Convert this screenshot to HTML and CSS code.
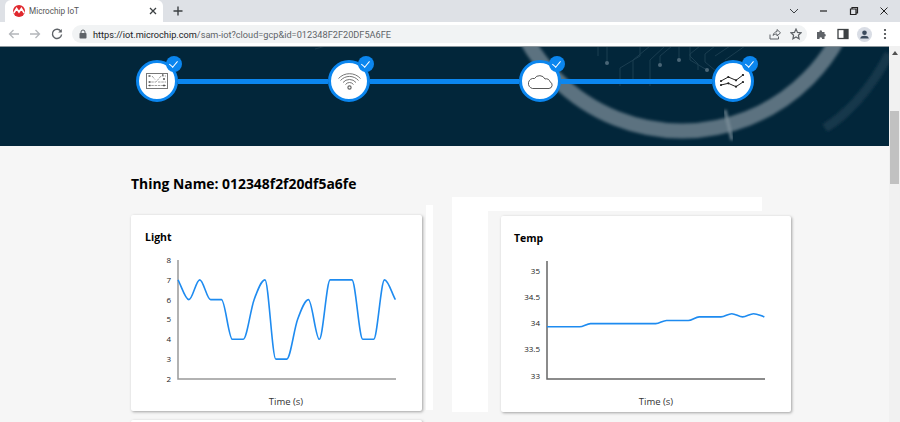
FILE: index.html
```html
<!DOCTYPE html>
<html lang="en">
<head>
    <meta charset="UTF-8">
    <title>Microchip IoT</title>
    <link rel="stylesheet" href="styles.css">
</head>
<body>
    <div class="tabstrip">
        <div class="tab">
            <svg class="favicon" width="12" height="12" viewBox="0 0 12 12">
                <circle cx="6" cy="6" r="6" fill="#e0282e"/>
                <path d="M.8 8 L3.6 3.500 L6 7 L8.400 3.500 L11.200 8" fill="none" stroke="#fff" stroke-width="1.600"/>
            </svg>
            <span class="tab-title">Microchip IoT</span>
            <svg class="tab-close" width="8" height="8" viewBox="0 0 8 8">
                <path d="M1 1 L7 7 M7 1 L1 7" stroke="#3c4043" stroke-width="1.3"/>
            </svg>
        </div>
        <svg class="new-tab" width="10" height="10" viewBox="0 0 10 10">
            <path d="M5 .5 V9.5 M.5 5 H9.5" stroke="#3c4043" stroke-width="1.4"/>
        </svg>
        <div class="window-btns">
            <svg width="10" height="10" viewBox="0 0 10 10"><path d="M1 3 L5 7 L9 3" fill="none" stroke="#3c4043"/></svg>
            <svg width="10" height="10" viewBox="0 0 10 10"><path d="M1 5 H8" stroke="#222" stroke-width="1.2"/></svg>
            <svg width="10" height="10" viewBox="0 0 10 10"><path d="M1.5 3 H7 V8.5 H1.5 Z M3 3 V1.5 H8.5 V7 H7" fill="none" stroke="#222" stroke-width="1.2"/></svg>
            <svg width="10" height="10" viewBox="0 0 10 10"><path d="M1.5 1.5 L8.5 8.5 M8.5 1.5 L1.5 8.5" stroke="#222"/></svg>
        </div>
    </div>

    <div class="toolbar">
        <svg class="nav-icon" width="12" height="12" viewBox="0 0 12 12"><path d="M11 6 H1.5 M5.5 2 L1.5 6 L5.5 10" fill="none" stroke="#b4b7bb" stroke-width="1.3"/></svg>
        <svg class="nav-icon" width="12" height="12" viewBox="0 0 12 12"><path d="M1 6 H10.5 M6.5 2 L10.5 6 L6.5 10" fill="none" stroke="#b4b7bb" stroke-width="1.3"/></svg>
        <svg class="nav-icon" width="12" height="12" viewBox="0 0 12 12"><path d="M10 3.5 A4.6 4.6 0 1 0 10.6 6.5" fill="none" stroke="#5f6368" stroke-width="1.4"/><path d="M10.8 1 V4.6 H7.2 Z" fill="#5f6368"/></svg>
        <div class="address">
            <svg class="lock" width="8" height="10" viewBox="0 0 8 10"><path d="M2 4.5 V3 A2 2 0 0 1 6 3 V4.5" fill="none" stroke="#5f6368"/><rect x=".5" y="4" width="7" height="5.5" rx=".8" fill="#5f6368"/></svg>
            <span class="url"><b>https://iot.microchip.com</b>/sam-iot?cloud=gcp&amp;id=012348F2F20DF5A6FE</span>
            <svg class="addr-icon" width="12" height="12" viewBox="0 0 12 12"><path d="M1 6.5 V11 H9.5 V8.5 M4 7.5 C4.5 5 6.5 3.6 8 3.6 V1.5 L11.5 4.8 L8 8 V6 C6.5 6 5 6.3 4 7.5 Z" fill="none" stroke="#5f6368"/></svg>
            <svg class="addr-icon" width="12" height="12" viewBox="0 0 12 12"><path d="M6 1 L7.5 4.4 L11 4.8 L8.4 7.2 L9.1 10.8 L6 9 L2.9 10.8 L3.6 7.2 L1 4.8 L4.5 4.4 Z" fill="none" stroke="#5f6368" stroke-width="1.2"/></svg>
        </div>
        <div class="tool-icons">
            <svg width="12" height="12" viewBox="0 0 12 12"><path d="M1 4 H3.5 A1.3 1.3 0 1 1 6 4 H8.5 V6 A1.3 1.3 0 1 1 8.5 8.6 V11 H6 A1.3 1.3 0 1 0 3.5 11 H1 Z" fill="#5f6368"/></svg>
            <svg width="12" height="12" viewBox="0 0 12 12"><rect x="1" y="1.5" width="10" height="9" fill="none" stroke="#3c4043" stroke-width="1.3"/><rect x="6.5" y="1.5" width="4.5" height="9" fill="#3c4043"/></svg>
            <span class="avatar">
                <svg width="15" height="15" viewBox="0 0 15 15"><circle cx="7.5" cy="5.7" r="2.3" fill="#3b4a5c"/><path d="M3.2 11.5 C3.4 9.3 5.4 8.7 7.5 8.7 C9.6 8.7 11.6 9.3 11.8 11.5 Z" fill="#3b4a5c"/></svg>
            </span>
            <svg width="12" height="12" viewBox="0 0 12 12"><circle cx="6" cy="2" r="1.1" fill="#3c4043"/><circle cx="6" cy="6" r="1.1" fill="#3c4043"/><circle cx="6" cy="10" r="1.1" fill="#3c4043"/></svg>
        </div>
    </div>

    <div class="viewport">
        <div class="page">
            <div class="hero">
                <!-- background art of the banner -->
                <svg class="hero-art" width="889" height="100" viewBox="0 0 889 100">
                    <defs>
                        <filter id="soft"><feGaussianBlur stdDeviation="1.5"/></filter>
                    </defs>
                    <circle cx="682" cy="-93" r="178" fill="none" stroke="#5c7280" stroke-width="15" filter="url(#soft)"/>
                    <path d="M725 64 L732 94" stroke="#7d909b" stroke-width="2.5" filter="url(#soft)"/>
                    <path d="M889 8 C870 45 845 70 825 82" fill="none" stroke="#16394c" stroke-width="9" filter="url(#soft)"/>
                    <g fill="none" stroke="#1b3e51">
                        <path d="M607 0 V17 M598 0 V10 M640 0 V10 L620 22 V40"/>
                        <path d="M650 0 L633 14 V34 M665 0 L650 14 V40 M672 0 L660 10 V19"/>
                        <path d="M679 0 V14 M690 0 V10 L698 18 V24 M700 0 L690 8 V14 L707 24"/>
                        <path d="M715 0 L705 8 V16 L722 30 M730 0 L715 10 M745 0 L725 14"/>
                    </g>
                    <g fill="#4a6676">
                        <circle cx="607" cy="17" r="2"/>
                        <circle cx="660" cy="19" r="2"/>
                        <circle cx="679" cy="14" r="2"/>
                        <circle cx="707" cy="24" r="2"/>
                    </g>
                    <path d="M326 0 L315 3" stroke="#17394b"/>
                </svg>
                <div class="steps">
                    <div class="step">
                        <svg width="22" height="16" viewBox="0 0 22 16">
                            <rect x=".5" y=".5" width="21" height="15" fill="none" stroke="#777"/>
                            <path d="M2 9 H10 L15 3 H20 M2 12.500 H20 M6 3 L9 6.500 M12 9 H20" fill="none" stroke="#888" stroke-width=".8" stroke-dasharray="2.500 .8"/>
                            <path d="M2.500 3 h2 M16 2 h1.500 M17 6 h2 M3 9 h1.500 M3 12.500 h1.500 M17 12.500 h2" stroke="#555" stroke-width="1.500"/>
                        </svg>
                        <span class="check"></span>
                    </div>
                    <div class="connector"></div>
                    <div class="step">
                        <svg width="23" height="17" viewBox="0 0 23 17">
                            <g fill="none" stroke="#666" stroke-width=".9">
                                <path d="M.5 5.500 A15 15 0 0 1 22.500 5.500"/>
                                <path d="M2.500 7.500 A12 12 0 0 1 20.500 7.500"/>
                                <path d="M5 9.500 A8.500 8.500 0 0 1 18 9.500"/>
                                <path d="M7.500 11.500 A5 5 0 0 1 15.500 11.500"/>
                                <circle cx="11.500" cy="14.500" r="1.600" stroke-width="1.200"/>
                            </g>
                        </svg>
                        <span class="check"></span>
                    </div>
                    <div class="connector"></div>
                    <div class="step">
                        <svg width="25" height="15" viewBox="0 0 25 15">
                            <path d="M4.500 14.500 H21 A3.500 3.500 0 0 0 22 7.800 A3.800 3.800 0 0 0 17 5 A6 6 0 0 0 6.500 4.500 A5 5 0 0 0 4.500 14.500 Z" fill="none" stroke="#444" stroke-width=".9"/>
                        </svg>
                        <span class="check"></span>
                    </div>
                    <div class="connector"></div>
                    <div class="step">
                        <svg class="graph-icon" width="24" height="14" viewBox="0 0 24 14">
                            <g fill="none" stroke="#222">
                                <path d="M1 7 L8.300 3 L16 6.300 L23 1"/>
                                <path d="M1 11 L8.300 9.300 L16 12.700 L23 8"/>
                            </g>
                            <g fill="#222">
                                <circle cx="1" cy="7" r="1.100"/><circle cx="8.300" cy="3" r="1.100"/><circle cx="16" cy="6.300" r="1.100"/><circle cx="23" cy="1" r="1.100"/>
                                <circle cx="1" cy="11" r="1.100"/><circle cx="8.300" cy="9.300" r="1.100"/><circle cx="16" cy="12.700" r="1.100"/><circle cx="23" cy="8" r="1.100"/>
                            </g>
                        </svg>
                        <span class="check"></span>
                    </div>
                </div>
            </div>

            <div class="content">
                <h2 class="thing-name">Thing Name: 012348f2f20df5a6fe</h2>
                <div class="chart-row">
                    <div class="card card-light">
                        <h3>Light</h3>
                        <svg class="chart" width="262" height="157" viewBox="0 0 262 157">
                            <path class="axis axis-light" d="M33 10 V129 H251"/>
                            <g class="tick">
                                <text x="26" y="13">8</text>
                                <text x="26" y="33">7</text>
                                <text x="26" y="53">6</text>
                                <text x="26" y="72">5</text>
                                <text x="26" y="92">4</text>
                                <text x="26" y="112">3</text>
                                <text x="26" y="132">2</text>
                            </g>
                            <path class="line" id="light-line"/>
                            <text class="axis-title" x="141" y="155">Time (s)</text>
                        </svg>
                    </div>
                    <div class="strip"></div>
                    <div class="ghost">
                        <div class="ghost-inner">
                            <div class="card card-temp">
                                <h3>Temp</h3>
                                <svg class="chart" width="262" height="157" viewBox="0 0 262 157">
                                    <path class="axis axis-temp" d="M32 10 V128 H250"/>
                                    <g class="tick">
                                        <text x="25" y="23">35</text>
                                        <text x="25" y="49">34.5</text>
                                        <text x="25" y="75">34</text>
                                        <text x="25" y="101">33.5</text>
                                        <text x="25" y="128">33</text>
                                    </g>
                                    <path class="line" id="temp-line"/>
                                    <text class="axis-title" x="141" y="154">Time (s)</text>
                                </svg>
                            </div>
                        </div>
                    </div>
                </div>
                <div class="card card-next"></div>
            </div>
        </div>
        <div class="scrollbar">
            <span class="scroll-up"></span>
            <span class="scroll-thumb"></span>
        </div>
    </div>

    <script src="charts.js"></script>
</body>
</html>
```

FILE: styles.css
```css
html, body {
    height: 422px;
    margin: 0;
    overflow: hidden;
}

body {
    width: 900px;
    font-family: "Open Sans", Arial, sans-serif;
    background-color: #f6f6f6;
}

/* Browser chrome */
.tabstrip {
    display: flex;
    align-items: center;
    height: 22px;
    background-color: #dee1e6;
}

.tab {
    display: flex;
    align-items: center;
    width: 158px;
    height: 22px;
    margin-left: 5px;
    background-color: #fff;
    border-radius: 6px 6px 0 0;
    box-sizing: border-box;
    padding: 0 6px 0 8px;
}

.tab-title {
    margin-left: 4px;
    font-family: Roboto, Arial, sans-serif;
    font-size: 8.2px;
    color: #555;
    flex: 1;
}

.new-tab {
    margin-left: 10px;
}

.window-btns {
    display: flex;
    gap: 20px;
    margin-left: auto;
    margin-right: 11px;
}

.toolbar {
    display: flex;
    align-items: center;
    height: 24px;
    background-color: #fff;
    box-sizing: border-box;
    padding-left: 8px;
}

.nav-icon {
    margin-right: 9px;
}

.nav-icon:nth-child(3) {
    margin: 0 0 0 1px;
}

.address {
    display: flex;
    align-items: center;
    width: 735px;
    height: 18px;
    margin-left: 9px;
    padding: 0 5px 0 7px;
    box-sizing: border-box;
    background-color: #f1f3f4;
    border-radius: 9px;
}

.url {
    margin-left: 6px;
    font-family: Roboto, Arial, sans-serif;
    font-size: 9.2px;
    color: #5f6368;
    flex: 1;
}

.url b {
    font-weight: 400;
    color: #202124;
}

.addr-icon {
    margin-left: 9px;
}

.tool-icons {
    display: flex;
    align-items: center;
    gap: 9px;
    margin-left: 9px;
}

.avatar {
    display: flex;
    width: 15px;
    height: 15px;
    margin: 0 -1.5px;
    border-radius: 50%;
    background-color: #d9dde5;
}

/* Page area */
.viewport {
    display: flex;
    height: 376px;
}

.page {
    width: 889px;
    overflow: hidden;
}

.scrollbar {
    display: flex;
    flex-direction: column;
    align-items: center;
    width: 11px;
    background-color: #f1f1f1;
}

.scroll-up {
    width: 0;
    height: 0;
    margin-top: 5px;
    border-left: 3px solid transparent;
    border-right: 3px solid transparent;
    border-bottom: 4px solid #505050;
}

.scroll-thumb {
    width: 9px;
    height: 73px;
    margin-top: 56px;
    background-color: #c1c1c1;
}

/* Banner */
.hero {
    position: relative;
    height: 100px;
    background-color: #02263a;
    border-top: 1px solid #8d979d;
    box-sizing: border-box;
    overflow: hidden;
}

.hero-art {
    position: absolute;
    top: -1px;
    left: 0;
}

.steps {
    position: relative;
    display: flex;
    align-items: center;
    padding: 13px 0 0 136px;
}

.step {
    position: relative;
    display: flex;
    align-items: center;
    justify-content: center;
    flex-shrink: 0;
    width: 42px;
    height: 42px;
    box-sizing: border-box;
    background-color: #fff;
    border: 3px solid #0b86ef;
    border-radius: 50%;
}

.connector {
    width: 150px;
    height: 5px;
    margin-top: 1px;
    background-color: #0b86ef;
}

.connector:nth-child(4) {
    width: 149px;
}

.connector:nth-child(6) {
    width: 151px;
}

.graph-icon {
    margin-right: 3px;
}

.check {
    position: absolute;
    top: -7px;
    right: -6.5px;
    width: 16px;
    height: 16px;
    background-color: #0b86ef;
    border-radius: 50%;
}

.check::after {
    content: "";
    position: absolute;
    top: 3px;
    left: 5.500px;
    width: 3.500px;
    height: 7px;
    border: solid #fff;
    border-width: 0 1.500px 1.500px 0;
    transform: rotate(40deg);
}

/* Charts */
.content {
    padding-left: 131px;
}

.thing-name {
    margin: 0;
    padding: 29px 0 4px;
    font-size: 13.9px;
    line-height: 18px;
    font-weight: 700;
    color: #000;
}

.chart-row {
    display: flex;
    align-items: flex-start;
}

.card {
    width: 291px;
    height: 196px;
    box-sizing: border-box;
    padding: 15px 14px 0;
    background-color: #fff;
    box-shadow: 1px 1px 3px rgba(0, 0, 0, 0.35);
    border-radius: 2px;
}

.card-light {
    margin-top: 18px;
    flex-shrink: 0;
}

.card h3 {
    margin: 0 0 6px;
    font-size: 10.500px;
    line-height: 14px;
    font-weight: 700;
    color: #000;
}

.card-temp {
    width: 290px;
}

.card-temp h3 {
    margin-left: -1px;
}

.strip {
    width: 7px;
    height: 205px;
    margin: 8px 0 0 4px;
    background-color: #fff;
}

.ghost {
    width: 310px;
    height: 215px;
    margin-left: 19px;
    padding-top: 14px;
    box-sizing: border-box;
    background-color: #fff;
}

.ghost-inner {
    height: 201px;
    margin-left: 36px;
    padding: 5px 0 0 13px;
    box-sizing: border-box;
    background-color: #f6f6f6;
}

.card-next {
    height: 20px;
    margin-top: 8px;
}

.chart {
    display: block;
}

.axis {
    fill: none;
    stroke-width: 1.500;
}

.axis-light {
    stroke: #999;
}

.axis-temp {
    stroke: #666;
}

.tick text {
    font-size: 8px;
    fill: #222;
    text-anchor: end;
}

.axis-title {
    font-size: 9.500px;
    fill: #333;
    text-anchor: middle;
}

.line {
    fill: none;
    stroke: #1e8bf0;
    stroke-width: 1.600;
}
```

FILE: charts.js
```js
// y values in svg pixels, one sample every 10.87px
const STEP = 10.87;

const lightValues = [7, 6, 7, 6, 6, 4, 4, 6, 7, 3, 3, 5, 6, 4, 7, 7, 7, 4, 4, 7, 6];
const tempValues = [33.94, 33.94, 33.94, 33.94, 34, 34, 34, 34, 34, 34, 34, 34.06, 34.06, 34.06,
    34.13, 34.13, 34.13, 34.19, 34.13, 34.19, 34.13];

function slope(a, b) {
    return (b - a) / STEP;
}

// monotone cubic through the points, flat at each turn
function tangents(ys) {
    return ys.map((y, i) => {
        if (i === 0) return slope(ys[0], ys[1]);
        if (i === ys.length - 1) return slope(ys[i - 1], y);
        const s0 = slope(ys[i - 1], y);
        const s1 = slope(y, ys[i + 1]);
        if (s0 * s1 <= 0) return 0;
        const sign = s0 > 0 ? 1 : -1;
        return sign * 2 * Math.min(Math.abs(s0), Math.abs(s1), Math.abs(s0 + s1) / 4);
    });
}

function drawLine(id, startX, ys) {
    const m = tangents(ys);
    let d = `M${startX} ${ys[0]}`;
    for (let i = 1; i < ys.length; i++) {
        const x0 = startX + (i - 1) * STEP;
        const x1 = x0 + STEP;
        const c = STEP / 3;
        d += ` C${x0 + c} ${ys[i - 1] + m[i - 1] * c} ${x1 - c} ${ys[i] - m[i] * c} ${x1} ${ys[i]}`;
    }
    document.getElementById(id).setAttribute('d', d);
}

drawLine('light-line', 33, lightValues.map(v => 10 + (8 - v) * 19.83));
drawLine('temp-line', 32, tempValues.map(v => 72.67 + (34 - v) * 52.5));
```
